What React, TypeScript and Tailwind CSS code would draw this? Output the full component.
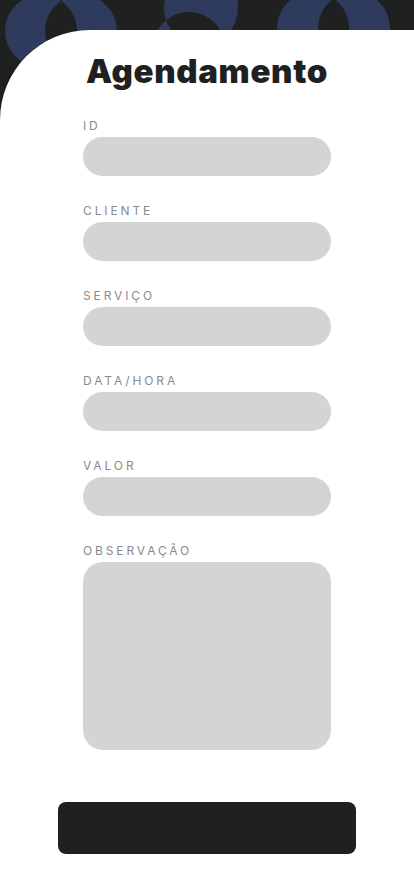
import React from "react";

const fields = ["ID", "CLIENTE", "SERVIÇO", "DATA/HORA", "VALOR"];

function Backdrop() {
  // decorative overlapping circles behind the card
  return (
    <svg className="absolute inset-x-0 top-0" width="414" height="100" viewBox="0 0 414 100">
      <g fill="#2e3b5c" fillRule="evenodd">
        <path d="M5 31a36 36 0 1 0 72 0a36 36 0 1 0 -72 0Z M45 31a36 36 0 1 0 72 0a36 36 0 1 0 -72 0Z" />
        <path d="M164 8a37 37 0 1 0 74 0a37 37 0 1 0 -74 0Z M153 48a36 36 0 1 0 72 0a36 36 0 1 0 -72 0Z" />
        <path d="M277 28a36 36 0 1 0 72 0a36 36 0 1 0 -72 0Z M318 28a36 36 0 1 0 72 0a36 36 0 1 0 -72 0Z" />
      </g>
    </svg>
  );
}

export default function App() {
  return (
    <div className="relative h-[896px] w-full overflow-hidden bg-[#1e2120] font-['Inter',sans-serif]">
      <Backdrop />
      <div className="relative mt-[30px] flex h-[866px] flex-col items-center rounded-tl-[90px] bg-white">
        <h1 className="mt-[21px] text-[33px] leading-[40px] font-black tracking-[0.02em] text-[#1e2120]">
          Agendamento
        </h1>

        <form className="mt-[27px] flex w-[248px] flex-col" onSubmit={(e) => e.preventDefault()}>
          {fields.map((f) => (
            <label key={f} className="mb-[27px] flex flex-col">
              <span className="mb-[3px] text-[12px] leading-[16px] tracking-[0.24em] text-[#8a8a8a]">{f}</span>
              <input className="h-[39px] rounded-[20px] bg-[#d4d4d4] px-4 outline-none" />
            </label>
          ))}
          <label className="flex flex-col">
            <span className="mb-[3px] text-[12px] leading-[16px] tracking-[0.24em] text-[#8a8a8a]">OBSERVAÇÃO</span>
            <textarea className="h-[188px] resize-none rounded-[20px] bg-[#d4d4d4] p-4 outline-none" />
          </label>
        </form>

        <button className="mt-[52px] h-[52px] w-[298px] rounded-lg bg-[#1e2120]" />
      </div>
    </div>
  );
}
